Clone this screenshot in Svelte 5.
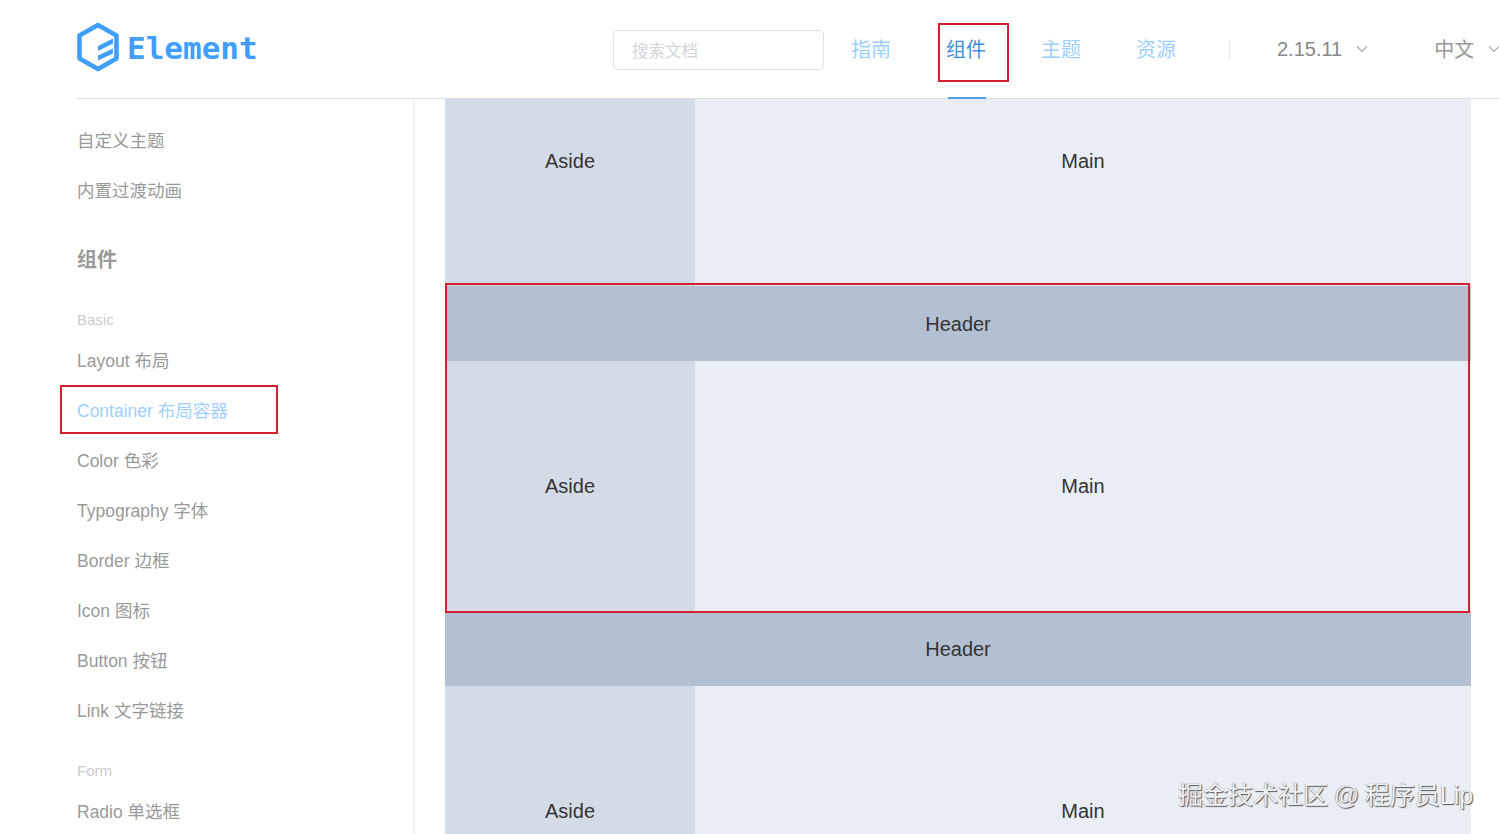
<script>
  const nav = [
    { label: '指南' },
    { label: '组件', active: true },
    { label: '主题' },
    { label: '资源' }
  ];
  const basics = ['Layout 布局', 'Container 布局容器', 'Color 色彩', 'Typography 字体', 'Border 边框', 'Icon 图标', 'Button 按钮', 'Link 文字链接'];
  const blocks = [1, 2, 3];
</script>

<div class="page">
  <header class="top">
    <div class="logo">
      <svg width="44" height="50" viewBox="0 0 44 50" class="mark">
        <path d="M22 3 L40.5 13.5 V36.5 L22 47 L3.5 36.5 V13.5 Z" fill="none" stroke="#409eff" stroke-width="4.6" stroke-linejoin="round" />
        <path d="M22 24 L37 16.5 V21.5 L22 29 Z M22 33.5 L37 26.5 V31.5 L22 38.5 Z" fill="#409eff" />
      </svg>
      <span class="word">Element</span>
    </div>
    <div class="search">搜索文档</div>
    <nav class="nav">
      {#each nav as item}
        <span class="nav-item" class:active={item.active}>{item.label}</span>
      {/each}
    </nav>
    <span class="divider"></span>
    <span class="version">2.15.11</span>
    <svg class="chev" width="12" height="8" viewBox="0 0 12 8"><path d="M1 1.5 L6 6.5 L11 1.5" fill="none" stroke="#a9a9a9" stroke-width="1.2" /></svg>
    <span class="lang">中文</span>
    <svg class="chev" width="12" height="8" viewBox="0 0 12 8"><path d="M1 1.5 L6 6.5 L11 1.5" fill="none" stroke="#a9a9a9" stroke-width="1.2" /></svg>
  </header>

  <div class="body">
    <aside class="side">
      <a class="link">自定义主题</a>
      <a class="link">内置过渡动画</a>
      <h4 class="heading">组件</h4>
      <div class="group">Basic</div>
      {#each basics as b, i}
        <a class="link" class:on={i === 1}>{b}</a>
      {/each}
      <div class="group form">Form</div>
      <a class="link">Radio 单选框</a>
    </aside>

    <main class="content">
      <div class="scroll">
        {#each blocks as n}
          <section class="demo">
            {#if n > 1}
              <div class="d-head">Header</div>
            {/if}
            <div class="d-row">
              <div class="d-aside">Aside</div>
              <div class="d-main">Main</div>
            </div>
          </section>
        {/each}
      </div>
    </main>
  </div>

  <div class="mark-box box-nav"></div>
  <div class="mark-box box-side"></div>
  <div class="mark-box box-main"></div>
  <div class="water">掘金技术社区 @ 程序员Lip</div>
</div>

<style>
  :global(body) {
    margin: 0;
    background: #fff;
  }
  .page {
    position: relative;
    width: 1499px;
    height: 834px;
    overflow: hidden;
    font-family: "Liberation Sans", "Noto Sans CJK SC", sans-serif;
    color: #333;
  }
  .top {
    display: flex;
    align-items: center;
    height: 98px;
    margin-left: 77px;
    border-bottom: 1px solid #dcdfe6;
    white-space: nowrap;
  }
  .logo {
    display: flex;
    align-items: center;
    width: 536px;
    flex: none;
  }
  .mark {
    margin-left: -1px;
    margin-top: -5px;
    flex: none;
  }
  .word {
    margin-left: 7px;
    font-family: "DejaVu Sans Mono", monospace;
    font-weight: 700;
    font-size: 31px;
    color: #409eff;
    line-height: 1;
    margin-top: -2px;
  }
  .search {
    flex: none;
    box-sizing: border-box;
    width: 211px;
    height: 40px;
    margin-top: 1px;
    padding-left: 18px;
    border: 1px solid #dcdfe6;
    border-radius: 5px;
    font-size: 16.5px;
    line-height: 40px;
    color: #d3d5d9;
  }
  .nav {
    display: flex;
    margin-left: 27px;
    align-self: stretch;
    gap: 55px;
  }
  .nav-item {
    position: relative;
    font-size: 20px;
    line-height: 100px;
    height: 98px;
    color: #a0cfff;
  }
  .nav-item.active {
    color: #3c8fe0;
  }
  .nav-item.active::after {
    content: '';
    position: absolute;
    left: 2px;
    right: 0;
    bottom: -1px;
    height: 2px;
    background: #4f9ee6;
  }
  .divider {
    flex: none;
    width: 1px;
    height: 20px;
    margin-left: 53px;
    margin-top: 2px;
    background: #e4e7ed;
  }
  .version {
    margin-left: 47px;
    margin-top: 1px;
    font-size: 20px;
    color: #888;
  }
  .chev {
    margin-left: 14px;
    flex: none;
  }
  .lang {
    margin-left: 66px;
    margin-top: -2px;
    font-size: 20px;
    color: #999;
  }
  .body {
    display: flex;
    height: 735px;
  }
  .side {
    box-sizing: border-box;
    width: 415px;
    flex: none;
    padding: 17px 0 0 77px;
    border-right: 2px solid #f2f4f7;
    display: flex;
    flex-direction: column;
    align-items: flex-start;
    overflow: hidden;
  }
  .link {
    font-size: 17.5px;
    line-height: 50px;
    height: 50px;
    flex: none;
    color: #9a9a9a;
  }
  .link.on {
    color: #a0cfff;
  }
  .heading {
    margin: 31px 0 0;
    font-size: 20px;
    line-height: 26px;
    font-weight: 700;
    color: #999;
  }
  .group {
    margin-top: 38px;
    font-size: 15px;
    line-height: 18px;
    color: #ccc;
    flex: none;
  }
  .group.form {
    margin-top: 26px;
  }
  .group + .link {
    margin-top: 7px;
  }
  .content {
    flex: 1;
    overflow: hidden;
    padding-left: 30px;
  }
  .scroll {
    width: 1026px;
    margin-top: -63px;
    font-size: 20px;
    text-align: center;
  }
  .d-head {
    height: 75px;
    line-height: 77px;
    background: #b3c0d1;
  }
  .d-row {
    display: flex;
    height: 250px;
    line-height: 250px;
  }
  .d-aside {
    width: 250px;
    flex: none;
    background: #d3dce6;
  }
  .d-main {
    flex: 1;
    background: #e9edf4;
  }
  .mark-box {
    position: absolute;
    box-sizing: border-box;
    border: 2px solid #d3202f;
  }
  .box-nav {
    left: 938px;
    top: 23px;
    width: 71px;
    height: 59px;
  }
  .box-side {
    left: 60px;
    top: 385px;
    width: 218px;
    height: 49px;
  }
  .box-main {
    left: 445px;
    top: 283px;
    width: 1025px;
    height: 330px;
  }
  .water {
    position: absolute;
    left: 1178px;
    top: 780px;
    font-size: 25px;
    line-height: 30px;
    white-space: nowrap;
    word-spacing: -1.2px;
    color: #eef1f5;
    text-shadow: 1px 1px 1px #555, -0.5px -0.5px 0 #999;
  }
</style>
